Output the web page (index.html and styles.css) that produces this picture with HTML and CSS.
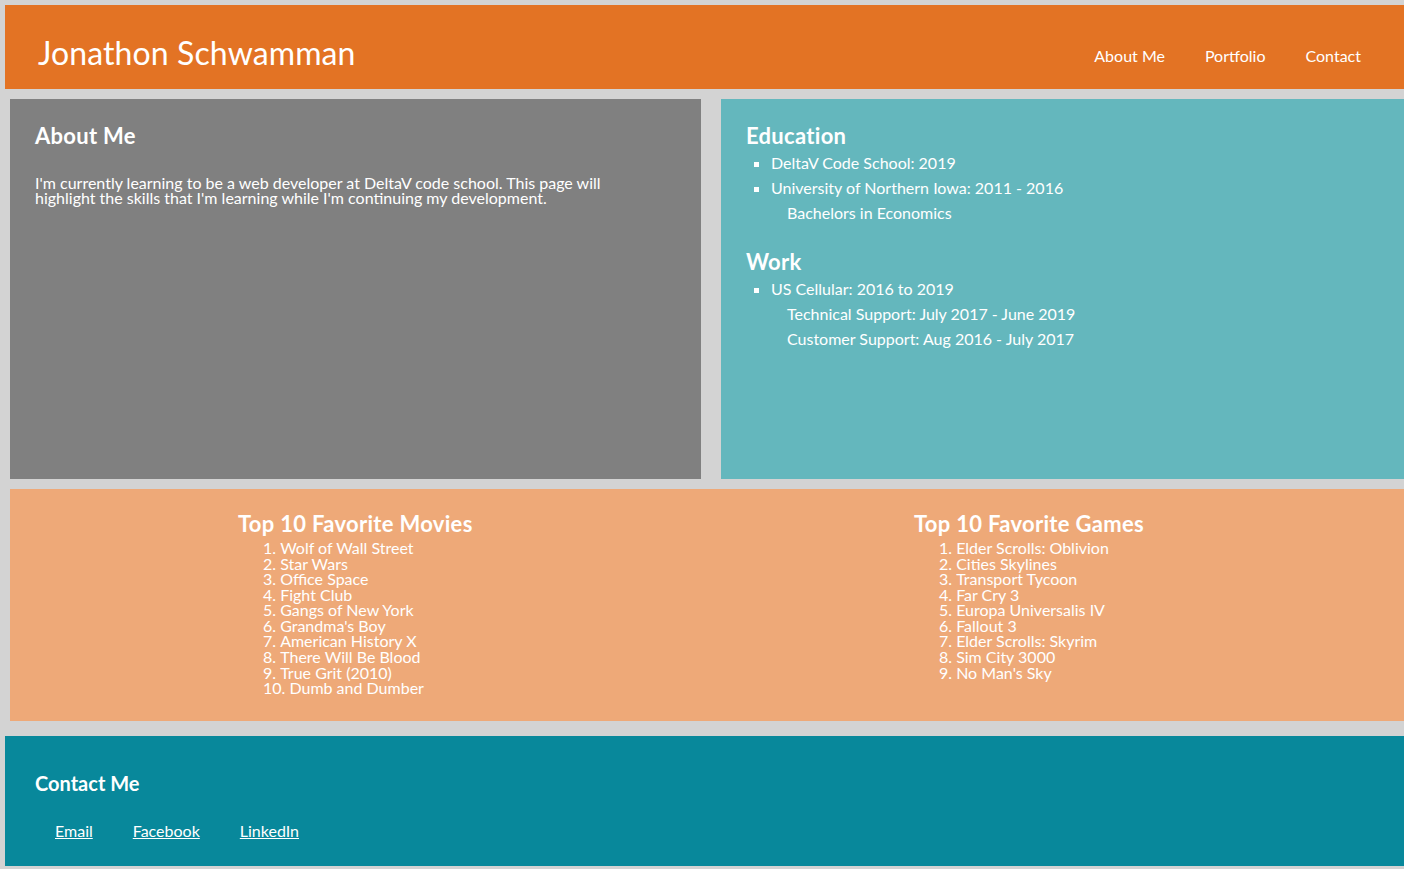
FILE: index.html
```html
<!DOCTYPE html>
<html lang="en">
<head>
<meta charset="utf-8">
<title>Jonathon Schwamman</title>
<link rel="stylesheet" href="styles.css">
</head>
<body>
<header class="site-header">
  <h1 class="site-title">Jonathon Schwamman</h1>
  <nav class="site-nav">
    <a href="#about">About Me</a>
    <a href="#portfolio">Portfolio</a>
    <a href="#contact">Contact</a>
  </nav>
</header>

<main class="page">
  <div class="top-row">
    <section class="panel panel-about" id="about">
      <h2 class="panel-title">About Me</h2>
      <p class="about-text">I'm currently learning to be a web developer at DeltaV code school. This page will highlight the skills that I'm learning while I'm continuing my development.</p>
    </section>
    <section class="panel panel-resume">
      <h2 class="panel-title">Education</h2>
      <ul class="resume-list">
        <li>DeltaV Code School: 2019</li>
        <li>University of Northern Iowa: 2011 - 2016
          <div class="resume-sub">Bachelors in Economics</div>
        </li>
      </ul>
      <h2 class="panel-title work-title">Work</h2>
      <ul class="resume-list">
        <li>US Cellular: 2016 to 2019
          <div class="resume-sub">Technical Support: July 2017 - June 2019</div>
          <div class="resume-sub">Customer Support: Aug 2016 - July 2017</div>
        </li>
      </ul>
    </section>
  </div>

  <section class="panel panel-favorites" id="portfolio">
    <div class="fav-col">
      <h2 class="panel-title">Top 10 Favorite Movies</h2>
      <ol class="fav-list">
        <li>Wolf of Wall Street</li>
        <li>Star Wars</li>
        <li>Office Space</li>
        <li>Fight Club</li>
        <li>Gangs of New York</li>
        <li>Grandma's Boy</li>
        <li>American History X</li>
        <li>There Will Be Blood</li>
        <li>True Grit (2010)</li>
        <li>Dumb and Dumber</li>
      </ol>
    </div>
    <div class="fav-col">
      <h2 class="panel-title">Top 10 Favorite Games</h2>
      <ol class="fav-list">
        <li>Elder Scrolls: Oblivion</li>
        <li>Cities Skylines</li>
        <li>Transport Tycoon</li>
        <li>Far Cry 3</li>
        <li>Europa Universalis IV</li>
        <li>Fallout 3</li>
        <li>Elder Scrolls: Skyrim</li>
        <li>Sim City 3000</li>
        <li>No Man's Sky</li>
      </ol>
    </div>
  </section>
</main>

<footer class="site-footer" id="contact">
  <h3 class="footer-title">Contact Me</h3>
  <div class="footer-links">
    <a href="#">Email</a>
    <a href="#">Facebook</a>
    <a href="#">LinkedIn</a>
  </div>
</footer>
</body>
</html>
```
FILE: styles.css
```css
html {
  overflow-x: hidden;
}

body {
  margin: 5px 0 0 5px;
  background: #d3d3d3;
  color: #ffffff;
  font-family: "Lato", "Liberation Sans", sans-serif;
  font-size: 16px;
}

/* Header */
.site-header {
  box-sizing: border-box;
  height: 84px;
  background: #e37324;
  display: flex;
  align-items: flex-start;
  padding: 28px 43px 0 33px;
}

.site-title {
  margin: 0;
  font-size: 32px;
  line-height: 40px;
  font-weight: normal;
  letter-spacing: 0.1px;
}

.site-nav {
  margin-left: auto;
  margin-top: 13px;
  display: flex;
  gap: 40px;
  line-height: 20px;
}

.site-nav a {
  color: #ffffff;
  text-decoration: none;
}

/* Main area */
.page {
  padding-left: 5px;
  margin-top: 10px;
}

.top-row {
  display: grid;
  grid-template-columns: 691px 1fr;
  gap: 20px;
  height: 380px;
}

.panel {
  box-sizing: border-box;
  padding: 24px 25px 22px;
}

.panel-title {
  margin: 0;
  font-size: 22px;
  line-height: 26px;
  font-weight: bold;
  letter-spacing: 0.3px;
}

.panel-about {
  background: #808080;
}

.about-text {
  max-width: 590px;
  margin: 26px 0 0;
  font-size: 16px;
  line-height: 15px;
}

.panel-resume {
  background: #64b7bd;
}

.resume-list {
  margin: 1px 0 0;
  padding-left: 25px;
  list-style: square;
  line-height: 25px;
}

.resume-sub {
  padding-left: 16px;
}

.work-title {
  margin-top: 24px;
}

/* Favorites */
.panel-favorites {
  margin-top: 10px;
  height: 232px;
  background: #eea978;
  display: grid;
  grid-template-columns: 676px 1fr;
  padding: 22px 0 0 228px;
}

.fav-list {
  margin: 3px 0 0;
  padding-left: 25px;
  list-style: decimal inside;
  line-height: 15.56px;
}

/* Footer */
.site-footer {
  box-sizing: border-box;
  margin-top: 15px;
  height: 130px;
  background: #08889b;
  padding: 35px 0 0 30px;
}

.footer-title {
  margin: 0;
  font-size: 20px;
  line-height: 24px;
  font-weight: bold;
}

.footer-links {
  margin: 26px 0 0 20px;
  display: flex;
  gap: 40px;
  line-height: 20px;
}

.footer-links a {
  color: #ffffff;
  text-decoration: underline;
}
```
